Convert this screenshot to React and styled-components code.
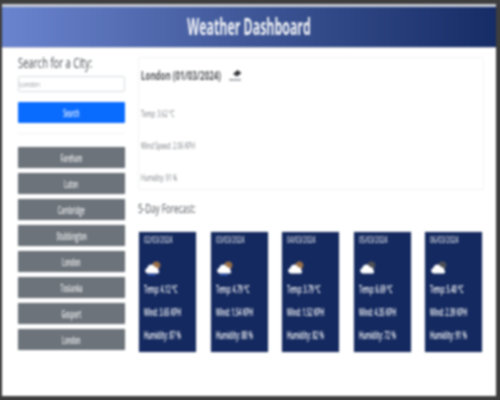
import React from "react";
import styled, { createGlobalStyle } from "styled-components";

const GlobalStyle = createGlobalStyle`
  html, body {
    margin: 0;
    height: 100%;
    background: #3d3d3d;
    overflow: hidden;
  }
  * {
    box-sizing: border-box;
  }
`;

const Frame = styled.div`
  width: 500px;
  height: 400px;
  padding: 4px 4px 4px 2px;
`;

const Page = styled.div`
  height: 392px;
  background: #fff;
  font-family: "Open Sans", "Liberation Sans", sans-serif;
  filter: blur(0.8px);
  overflow: hidden;
`;

// the whole screenshot is squashed sideways, so its text runs narrow
const Squeezed = styled.span`
  display: inline-block;
  white-space: nowrap;
  transform: scaleX(${(props) => props.$x});
  transform-origin: ${(props) => (props.$center ? "center" : "left")};
`;

const Header = styled.header`
  height: 44px;
  padding-bottom: 3px;
  border-top: 3px solid #c9ccd6;
  border-bottom: 1px solid #c3c7d4;
  background: linear-gradient(to right, #6a84cf, #3f5797 50%, #152c66);
  color: #f4f5f8;
  display: flex;
  align-items: center;
  justify-content: center;
  font-size: 24px;
  font-weight: 700;
`;

const Content = styled.div`
  display: flex;
  gap: 13px;
  padding: 9px 12px 0 16px;
`;

const Sidebar = styled.aside`
  width: 107px;
  display: flex;
  flex-direction: column;
`;

const SearchTitle = styled.div`
  height: 19px;
  font-size: 15px;
  line-height: 11px;
  color: #4a4f55;
`;

const SearchInput = styled.input`
  height: 16px;
  width: 107px;
  padding: 0;
  border: 1px solid #d9dce0;
  border-radius: 2px;
  background: #fff;
  font-family: inherit;
  font-size: 7.5px;
  letter-spacing: -1.1px;
  &::placeholder {
    color: #a5a9ae;
  }
`;

const SearchButton = styled.button`
  height: 21px;
  margin-top: 10px;
  border: 0;
  border-radius: 1px;
  background: #0a6cff;
  color: #e6eeff;
  font-family: inherit;
  font-size: 10px;
  font-weight: 600;
`;

const Rule = styled.div`
  height: 1px;
  margin-top: 10px;
  margin-bottom: 13px;
  background: #f3f3f4;
`;

const CityList = styled.div`
  display: flex;
  flex-direction: column;
  gap: 5px;
`;

const CityButton = styled.button`
  height: 21px;
  border: 0;
  border-radius: 1px;
  background: #6c737a;
  box-shadow: 0 0 1px #9ea3a8;
  color: #eceef0;
  font-family: inherit;
  font-size: 10px;
  font-weight: 600;
`;

const Main = styled.main`
  width: 346px;
  display: flex;
  flex-direction: column;
`;

const CurrentPanel = styled.section`
  height: 133px;
  padding: 10px 2px 0;
  border: 1px solid #f4f4f5;
  border-radius: 2px;
  display: flex;
  flex-direction: column;
`;

const CityHeading = styled.div`
  height: 14px;
  display: flex;
  align-items: center;
  gap: 6px;
  font-size: 12px;
  font-weight: 700;
  color: #53575c;
`;

const HeadingText = styled(Squeezed)`
  width: 82px;
`;

const Stat = styled.p`
  margin: ${(props) => props.$top}px 0 0;
  height: 12px;
  font-size: 8.5px;
  line-height: 12px;
  color: #74797f;
`;

const ForecastTitle = styled.h2`
  margin: 11px 0 0;
  height: 15px;
  font-size: 13px;
  line-height: 15px;
  font-weight: 400;
  color: #4f5358;
`;

const CardRow = styled.div`
  margin-top: 16px;
  padding-left: 1px;
  display: flex;
  gap: 14.5px;
`;

const Card = styled.article`
  width: 57px;
  height: 120px;
  padding: 2px 5px 0;
  background: #14295f;
  box-shadow: 0 0 1px #8f97ab;
  color: #fff;
  font-size: 10px;
  font-weight: 600;
  display: flex;
  flex-direction: column;
`;

const CardDate = styled.div`
  height: 11px;
  line-height: 11px;
  font-size: 9px;
  font-weight: 400;
`;

const CardIcon = styled.svg`
  width: 16px;
  height: 16px;
  margin-top: 15px;
  margin-left: 1px;
  display: block;
`;

const CardLine = styled.div`
  height: 11px;
  line-height: 11px;
  margin-top: ${(props) => props.$top}px;
`;

const sunColors = { rain: "#9a7048", cloud: "#9a7048", dark: "#4f5056" };

const WeatherIcon = ({ kind }) => (
  <CardIcon viewBox="0 0 18 18">
    <circle cx="12.8" cy="6" r="4.4" fill={sunColors[kind]} />
    <path
      d="M3 15.2 a3.2 3.2 0 0 1 -.4 -6.3 a4.4 4.4 0 0 1 8.4 -1 a3.5 3.5 0 0 1 4 3.6 a2.1 2.1 0 0 1 -.6 3.7 z"
      fill="#fff"
    />
    {kind === "rain" && (
      <path d="M5 15.5 l-.8 2.4 M8 15.5 l-.8 2.4 M11 15.5 l-.8 2.4" stroke="#2f62d8" strokeWidth="1.5" />
    )}
  </CardIcon>
);

const CurrentIcon = styled.svg`
  width: 14px;
  height: 13px;
  display: block;
`;

const cities = ["Fareham", "Luton", "Cambridge", "Stubbington", "London", "Tosianka", "Gosport", "London"];

const forecast = [
  { date: "02/03/2024", temp: "4.12", wind: "3.65", humidity: 87, icon: "rain" },
  { date: "03/03/2024", temp: "4.79", wind: "1.54", humidity: 88, icon: "rain" },
  { date: "04/03/2024", temp: "3.79", wind: "1.52", humidity: 82, icon: "cloud" },
  { date: "05/03/2024", temp: "6.69", wind: "4.35", humidity: 72, icon: "dark" },
  { date: "06/03/2024", temp: "5.40", wind: "2.39", humidity: 91, icon: "dark" },
];

export default function App() {
  return (
    <Frame>
      <GlobalStyle />
      <Page>
        <Header>
          <Squeezed $x={0.515} $center>Weather Dashboard</Squeezed>
        </Header>
        <Content>
          <Sidebar>
            <SearchTitle>
              <Squeezed $x={0.63}>Search for a City:</Squeezed>
            </SearchTitle>
            <SearchInput placeholder="London" />
            <SearchButton>
              <Squeezed $x={0.5} $center>Search</Squeezed>
            </SearchButton>
            <Rule />
            <CityList>
              {cities.map((city, i) => (
                <CityButton key={i}>
                  <Squeezed $x={0.51} $center>{city}</Squeezed>
                </CityButton>
              ))}
            </CityList>
          </Sidebar>
          <Main>
            <CurrentPanel>
              <CityHeading>
                <HeadingText $x={0.66}>London (01/03/2024)</HeadingText>
                <CurrentIcon viewBox="0 0 14 13">
                  <path d="M4 5 L8.5 1 L12.5 4 L8 7.5 z" fill="#33353a" />
                  <rect x="0" y="10" width="12" height="1.6" fill="#9a9da2" />
                </CurrentIcon>
              </CityHeading>
              <Stat $top={26}>
                <Squeezed $x={0.61}>Temp: 3.62 °C</Squeezed>
              </Stat>
              <Stat $top={20}>
                <Squeezed $x={0.62}>Wind Speed: 2.06 KPH</Squeezed>
              </Stat>
              <Stat $top={20}>
                <Squeezed $x={0.61}>Humidity: 91 %</Squeezed>
              </Stat>
            </CurrentPanel>
            <ForecastTitle>
              <Squeezed $x={0.62}>5-Day Forecast:</Squeezed>
            </ForecastTitle>
            <CardRow>
              {forecast.map((day) => (
                <Card key={day.date}>
                  <CardDate>
                    <Squeezed $x={0.6}>{day.date}</Squeezed>
                  </CardDate>
                  <WeatherIcon kind={day.icon} />
                  <CardLine $top={8}>
                    <Squeezed $x={0.51}>Temp: {day.temp} °C</Squeezed>
                  </CardLine>
                  <CardLine $top={12}>
                    <Squeezed $x={0.51}>Wind: {day.wind} KPH</Squeezed>
                  </CardLine>
                  <CardLine $top={12}>
                    <Squeezed $x={0.51}>Humidity: {day.humidity} %</Squeezed>
                  </CardLine>
                </Card>
              ))}
            </CardRow>
          </Main>
        </Content>
      </Page>
    </Frame>
  );
}
